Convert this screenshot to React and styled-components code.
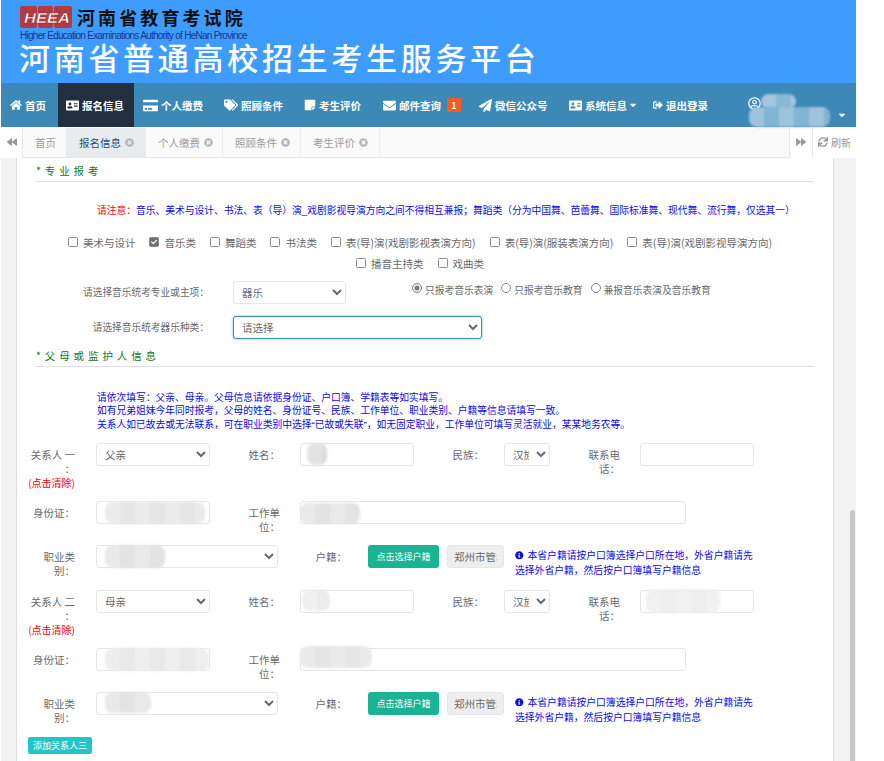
import styled, { createGlobalStyle } from "styled-components";
import {
  FaHome,
  FaAddressCard,
  FaCreditCard,
  FaTags,
  FaStickyNote,
  FaEnvelope,
  FaPaperPlane,
  FaSignOutAlt,
  FaRegUserCircle,
  FaCaretDown,
  FaBackward,
  FaForward,
  FaSync,
  FaTimesCircle,
  FaInfoCircle,
  FaCheck,
} from "react-icons/fa";

const FONT = `"Noto Sans CJK SC", "Liberation Sans", sans-serif`;

const GlobalStyle = createGlobalStyle`
  html, body {
    margin: 0;
    padding: 0;
    height: 761px;
    overflow: hidden;
    background: #fff;
    font-family: ${FONT};
    color: #676a6c;
  }
  * {
    box-sizing: border-box;
  }
`;

const Shell = styled.div`
  display: flex;
  flex-direction: column;
  width: 855px;
  height: 761px;
  margin-left: 1px;
  overflow: hidden;
`;

const Banner = styled.header`
  flex: none;
  height: 83px;
  padding: 5px 0 0 18px;
  background: #3e9cff;
`;

const BrandRow = styled.div`
  display: flex;
  align-items: center;
  height: 25px;
`;

const BrandName = styled.div`
  margin-left: 4px;
  font-size: 18px;
  font-weight: 700;
  line-height: 25px;
  letter-spacing: 3.1px;
  color: #111;
`;

const BrandEnglish = styled.div`
  margin: 0 0 0 1px;
  font-family: "Liberation Sans", sans-serif;
  font-size: 10px;
  line-height: 11px;
  letter-spacing: -0.72px;
  color: #17358a;
  white-space: nowrap;
`;

const PlatformTitle = styled.h1`
  margin: -4px 0 0;
  font-size: 31px;
  font-weight: 500;
  line-height: 40px;
  letter-spacing: 3.7px;
  color: #fff;
  white-space: nowrap;
`;

const Nav = styled.nav`
  flex: none;
  display: flex;
  height: 44px;
  background: #3c89b8;
`;

const NavItem = styled.a`
  display: flex;
  flex: none;
  align-items: center;
  gap: 3px;
  width: ${({ $width }) => $width}px;
  padding-left: ${({ $active }) => ($active ? 8 : 9)}px;
  font-size: 10.5px;
  font-weight: 700;
  color: #fff;
  background: ${({ $active }) => ($active ? "#232f3e" : "transparent")};
  white-space: nowrap;

  svg {
    flex: none;
    font-size: ${({ $icon }) => $icon}px;
  }
`;

const NavCaret = styled(FaCaretDown)`
  margin-left: -2px;

  && {
    font-size: 10px;
  }
`;

const Badge = styled.span`
  display: inline-flex;
  justify-content: center;
  align-items: center;
  width: 14px;
  height: 14px;
  margin-left: 3px;
  border-radius: 1px;
  font-size: 9px;
  background: #fb5a20;
`;

const UserArea = styled.div`
  position: relative;
  display: flex;
  flex: 1;
  padding: 14px 0 0 13px;
  color: #fff;
  font-size: 13px;
`;

const UserCaret = styled(FaCaretDown)`
  position: absolute;
  top: 27px;
  left: 102px;
  font-size: 10px;
`;

const Tabs = styled.div`
  flex: none;
  display: flex;
  height: 30px;
  margin-top: 1px;
  font-size: 10.5px;
`;

const TabArrow = styled.div`
  display: flex;
  flex: none;
  justify-content: center;
  align-items: center;
  width: ${({ $width }) => $width}px;
  padding-bottom: 2px;
  border-left: ${({ $edge }) => ($edge ? "1px solid #e7e7e7" : "none")};
  color: #999;
  font-size: 10px;
  gap: 3px;
  white-space: nowrap;
`;

const TabStrip = styled.div`
  display: flex;
  flex: 1;
  border: solid #e7e7e7;
  border-width: 0 0 1px 1px;
  background: #fafafa;
`;

const Tab = styled.div`
  display: flex;
  flex: none;
  align-items: center;
  gap: 4px;
  width: ${({ $width }) => $width}px;
  padding-left: 12px;
  border-right: 1px solid #ececec;
  color: ${({ $active }) => ($active ? "#1f4a78" : "#9a9a9a")};
  background: ${({ $active }) => ($active ? "#e9ecef" : "transparent")};

  svg {
    font-size: 9px;
    color: #b5b5b5;
  }
`;

const Body = styled.div`
  position: relative;
  display: flex;
  flex: 1;
  min-height: 0;
`;

const Gutter = styled.div`
  flex: none;
  width: ${({ $width }) => $width}px;
  background: #f3f3f3;
  border: solid #dedede;
  border-width: ${({ $side }) => ($side === "left" ? "0 1px 0 0" : "0 0 0 1px")};
`;

const ScrollThumb = styled.div`
  position: absolute;
  top: 352px;
  right: 1px;
  width: 5px;
  height: 260px;
  border-radius: 3px 3px 0 0;
  background: #c8c8c8;
`;

const Content = styled.main`
  flex: none;
  width: 816px;
  overflow: hidden;
  background: #fff;
`;

const SectionHead = styled.div`
  display: flex;
  align-items: flex-end;
  height: ${({ $height }) => $height}px;
  margin: 0 19px;
  padding-bottom: 4px;
  border-bottom: 1px solid #e0e0e0;
  font-size: 10.5px;
  line-height: 13px;
  letter-spacing: 3.9px;
  color: #127a12;
  white-space: nowrap;
`;

const Notice = styled.div`
  padding: ${({ $top }) => $top}px 0 0 80px;
  font-family: "Liberation Sans", ${FONT};
  font-size: 9.75px;
  line-height: 13.5px;
  color: #0a0aee;
  white-space: nowrap;

  b {
    font-weight: 400;
    color: #f00;
  }
`;

const CheckRow = styled.div`
  display: flex;
  justify-content: center;
  align-items: center;
  gap: 14px;
  width: 806px;
  height: 21px;
  margin-top: ${({ $top }) => $top ?? 0}px;
  font-size: 10.5px;
`;

const CheckItem = styled.label`
  display: flex;
  align-items: center;
  gap: 5px;
  white-space: nowrap;
`;

const CheckBox = styled.span`
  display: inline-flex;
  justify-content: center;
  align-items: center;
  width: 10px;
  height: 10px;
  border: 1px solid #8a8a8a;
  border-radius: 1.5px;
  color: #fff;
  font-size: 6px;
  background: ${({ $on }) => ($on ? "#6e6e6e" : "#fff")};
`;

const ChoiceRow = styled.div`
  display: flex;
  align-items: flex-start;
  height: ${({ $height }) => $height}px;
  margin-top: ${({ $top }) => $top ?? 0}px;
  font-size: 9.7px;
`;

const ChoiceLabel = styled.div`
  flex: none;
  width: 192px;
  margin-right: 24px;
  padding-top: 4px;
  line-height: 14px;
  text-align: right;
  white-space: nowrap;
`;

const Field = styled.select`
  flex: none;
  width: ${({ $width }) => $width}px;
  height: 23px;
  padding: 0 4px;
  border: 1px solid ${({ $focus }) => ($focus ? "#3c8dbc" : "#e5e6e7")};
  border-radius: 3px;
  outline: none;
  box-shadow: ${({ $focus }) => ($focus ? "0 0 3px rgba(60, 141, 188, 0.6)" : "none")};
  font-family: ${FONT};
  font-size: 10.5px;
  color: #676a6c;
  background: #fff;
`;

const RadioGroup = styled.div`
  display: flex;
  gap: 8px;
  margin: 2px 0 0 66px;
`;

const RadioItem = styled.label`
  display: flex;
  align-items: center;
  gap: 3px;
  line-height: 14px;
  white-space: nowrap;
  font-size: 9.75px;
`;

const RadioDot = styled.span`
  display: inline-block;
  width: 10px;
  height: 10px;
  margin-top: -3px;
  border: 1px solid #888;
  border-radius: 50%;
  background: ${({ $on }) => ($on ? "#777" : "#fff")};
  box-shadow: inset 0 0 0 1.5px #fff;
`;

const PersonGap = styled.div`
  height: 12px;
`;

const PersonRow = styled.div`
  display: flex;
  align-items: flex-start;
  height: ${({ $height }) => $height}px;
  padding-left: 13px;
  font-size: 10.5px;
`;

const Label = styled.div`
  flex: none;
  width: 45px;
  margin: 0 ${({ $after }) => $after ?? 21}px 0 ${({ $before }) => $before ?? 0}px;
  padding-top: 5px;
  line-height: 14px;
  text-align: right;
`;

const ClearLink = styled.span`
  display: block;
  margin-left: -2px;
  font-size: 10px;
  white-space: nowrap;
  color: #f00;
`;

const Slot = styled.div`
  position: relative;
  flex: none;
  width: ${({ $width }) => $width}px;
  height: 23px;
`;

const TextBox = styled.input`
  display: block;
  width: 100%;
  height: 100%;
  padding: 0 6px;
  border: 1px solid #e5e6e7;
  border-radius: 3px;
  outline: none;
  font-family: ${FONT};
  font-size: 10.5px;
  color: #676a6c;
  background: ${({ disabled }) => (disabled ? "#eeeeee" : "#fff")};
`;

const Smudge = styled.div`
  position: absolute;
  top: ${({ $top }) => $top}px;
  left: ${({ $left }) => $left}px;
  width: ${({ $w }) => $w}px;
  height: ${({ $h }) => $h}px;
  border-radius: 8px;
  background-color: ${({ $color }) => $color ?? "#e6e6e6"};
  background-image: repeating-linear-gradient(90deg, rgba(255, 255, 255, 0.22) 0 15px, transparent 15px 30px);
  filter: blur(1px);
  pointer-events: none;
`;

const PickButton = styled.button`
  flex: none;
  width: 71px;
  height: 23px;
  margin-right: 8px;
  padding: 0;
  border: none;
  border-radius: 3px;
  font-family: ${FONT};
  font-size: 9px;
  color: #fff;
  background: #1ab394;
`;

const Hint = styled.div`
  flex: none;
  margin: 3px 0 0 11px;
  font-size: 9.8px;
  line-height: 14.5px;
  color: #0a0aee;
  white-space: nowrap;

  svg {
    margin-right: 4px;
    font-size: 8.5px;
    vertical-align: -0.5px;
  }
`;

const AddButton = styled.button`
  display: block;
  width: 64px;
  height: 17px;
  margin: 0 0 0 11px;
  padding: 0;
  border: none;
  border-radius: 2px;
  font-family: ${FONT};
  font-size: 9px;
  color: #fff;
  background: #23c6c8;
`;

const NAV_ITEMS = [
  { text: "首页", icon: <FaHome />, width: 57, size: 12 },
  { text: "报名信息", icon: <FaAddressCard />, width: 76, size: 13, active: true },
  { text: "个人缴费", icon: <FaCreditCard />, width: 81, size: 15 },
  { text: "照顾条件", icon: <FaTags />, width: 80, size: 14 },
  { text: "考生评价", icon: <FaStickyNote />, width: 79, size: 12 },
  { text: "邮件查询", icon: <FaEnvelope />, width: 96, size: 13, badge: "1" },
  { text: "微信公众号", icon: <FaPaperPlane />, width: 90, size: 13 },
  { text: "系统信息", icon: <FaAddressCard />, width: 84, size: 13, caret: true },
  { text: "退出登录", icon: <FaSignOutAlt />, width: 91, size: 10 },
];

const TAB_ITEMS = [
  { text: "报名信息", width: 79, active: true },
  { text: "个人缴费", width: 77 },
  { text: "照顾条件", width: 78 },
  { text: "考生评价", width: 79 },
];

const SUBJECTS = ["美术与设计", "音乐类", "舞蹈类", "书法类", "表(导)演(戏剧影视表演方向)", "表(导)演(服装表演方向)", "表(导)演(戏剧影视导演方向)"];

function Logo() {
  return (
    <svg width="54" height="25" viewBox="0 0 54 25">
      <rect x="1" y="1" width="17" height="22" rx="2" fill="#b23a40" />
      <rect x="19" y="1" width="15" height="22" rx="2" fill="#b23a40" />
      <rect x="35" y="1" width="18" height="22" rx="2" fill="#b23a40" />
      <text x="5" y="18" fontFamily="Liberation Sans" fontStyle="italic" fontWeight="700" fontSize="15" fill="#fff" stroke="#7d2428" strokeWidth="0.4" textLength="46" lengthAdjust="spacingAndGlyphs">
        HEEA
      </text>
    </svg>
  );
}

function Person({ order, relation, smudges }) {
  return (
    <>
      <PersonRow $height={58}>
        <Label>
          关系人 {order} ：<ClearLink>(点击清除)</ClearLink>
        </Label>
        <Field $width={114}>
          <option>{relation}</option>
        </Field>
        <Label $before={25} $after={20}>
          姓名：
        </Label>
        <Slot $width={114}>
          <TextBox />
          {smudges.name}
        </Slot>
        <Label $before={25} $after={20}>
          民族：
        </Label>
        <Field $width={46}>
          <option>汉族</option>
        </Field>
        <Label $before={25} $after={20}>
          联系电话：
        </Label>
        <Slot $width={114}>
          <TextBox />
          {smudges.phone}
        </Slot>
      </PersonRow>
      <PersonRow $height={44}>
        <Label>身份证：</Label>
        <Slot $width={114}>
          <TextBox />
          {smudges.id}
        </Slot>
        <Label $before={25} $after={20}>
          工作单位：
        </Label>
        <Slot $width={386}>
          <TextBox />
          {smudges.work}
        </Slot>
      </PersonRow>
      <PersonRow $height={45}>
        <Label>职业类别：</Label>
        <Slot $width={182}>
          <Field $width={182}>
            <option> </option>
          </Field>
          {smudges.job}
        </Slot>
        <Label $before={24} $after={21}>
          户籍：
        </Label>
        <PickButton>点击选择户籍</PickButton>
        <Slot $width={57}>
          <TextBox disabled value="郑州市管城回族区" readOnly />
        </Slot>
        <Hint>
          <FaInfoCircle />
          本省户籍请按户口簿选择户口所在地，外省户籍请先
          <br />
          选择外省户籍，然后按户口簿填写户籍信息
        </Hint>
      </PersonRow>
    </>
  );
}

export default function App() {
  return (
    <Shell>
      <GlobalStyle />
      <Banner>
        <BrandRow>
          <Logo />
          <BrandName>河南省教育考试院</BrandName>
        </BrandRow>
        <BrandEnglish>Higher Education Examinations Authority of HeNan Province</BrandEnglish>
        <PlatformTitle>河南省普通高校招生考生服务平台</PlatformTitle>
      </Banner>

      <Nav>
        {NAV_ITEMS.map((item) => (
          <NavItem key={item.text} $width={item.width} $icon={item.size} $active={item.active}>
            {item.icon}
            {item.text}
            {item.badge && <Badge>{item.badge}</Badge>}
            {item.caret && <NavCaret />}
          </NavItem>
        ))}
        <UserArea>
          <FaRegUserCircle />
          <Smudge $top={11} $left={26} $w={35} $h={15} $color="#88b8d6" />
          <Smudge $top={24} $left={14} $w={81} $h={20} $color="#82b4d3" />
          <UserCaret />
        </UserArea>
      </Nav>

      <Tabs>
        <TabArrow $width={21}>
          <FaBackward />
        </TabArrow>
        <TabStrip>
          <Tab $width={44}>首页</Tab>
          {TAB_ITEMS.map((tab) => (
            <Tab key={tab.text} $width={tab.width} $active={tab.active}>
              {tab.text}
              <FaTimesCircle />
            </Tab>
          ))}
        </TabStrip>
        <TabArrow $width={23} $edge>
          <FaForward />
        </TabArrow>
        <TabArrow $width={44} $edge>
          <FaSync />
          刷新
        </TabArrow>
      </Tabs>

      <Body>
        <Gutter $side="left" $width={16} />
        <Content>
          <SectionHead $height={24}>*专业报考</SectionHead>
          <Notice $top={22}>
            <b>请注意：</b>音乐、美术与设计、书法、表（导）演_戏剧影视导演方向之间不得相互兼报；舞蹈类（分为中国舞、芭蕾舞、国际标准舞、现代舞、流行舞，仅选其一）
          </Notice>
          <CheckRow $top={14}>
            {SUBJECTS.map((name) => (
              <CheckItem key={name}>
                <CheckBox $on={name === "音乐类"}>{name === "音乐类" && <FaCheck />}</CheckBox>
                {name}
              </CheckItem>
            ))}
          </CheckRow>
          <CheckRow>
            <CheckItem>
              <CheckBox />
              播音主持类
            </CheckItem>
            <CheckItem>
              <CheckBox />
              戏曲类
            </CheckItem>
          </CheckRow>
          <ChoiceRow $height={35} $top={7}>
            <ChoiceLabel>请选择音乐统考专业或主项：</ChoiceLabel>
            <Field $width={113}>
              <option>器乐</option>
            </Field>
            <RadioGroup>
              <RadioItem>
                <RadioDot $on />
                只报考音乐表演
              </RadioItem>
              <RadioItem>
                <RadioDot />
                只报考音乐教育
              </RadioItem>
              <RadioItem>
                <RadioDot />
                兼报音乐表演及音乐教育
              </RadioItem>
            </RadioGroup>
          </ChoiceRow>
          <ChoiceRow $height={30}>
            <ChoiceLabel>请选择音乐统考器乐种类：</ChoiceLabel>
            <Field $width={249} $focus>
              <option>请选择</option>
            </Field>
          </ChoiceRow>
          <SectionHead $height={21}>*父母或监护人信息</SectionHead>
          <Notice $top={24}>
            请依次填写：父亲、母亲。父母信息请依据身份证、户口簿、学籍表等如实填写。
            <br />
            如有兄弟姐妹今年同时报考，父母的姓名、身份证号、民族、工作单位、职业类别、户籍等信息请填写一致。
            <br />
            关系人如已故去或无法联系，可在职业类别中选择“已故或失联”，如无固定职业，工作单位可填写灵活就业，某某地务农等。
          </Notice>
          <PersonGap />
          <Person
            order="一"
            relation="父亲"
            smudges={{
              name: <Smudge $top={0} $left={7} $w={20} $h={22} $color="#dcdcdc" />,
              id: <Smudge $top={1} $left={9} $w={100} $h={22} />,
              work: <Smudge $top={2} $left={0} $w={60} $h={21} $color="#e3e3e3" />,
              job: <Smudge $top={0} $left={9} $w={60} $h={23} $color="#e3e3e3" />,
            }}
          />
          <Person
            order="二"
            relation="母亲"
            smudges={{
              name: <Smudge $top={0} $left={2} $w={28} $h={21} $color="#ececec" />,
              phone: <Smudge $top={-1} $left={6} $w={74} $h={24} $color="#eeeeee" />,
              id: <Smudge $top={0} $left={9} $w={104} $h={23} $color="#e9e9e9" />,
              work: <Smudge $top={-2} $left={0} $w={72} $h={22} $color="#e5e5e5" />,
              job: <Smudge $top={0} $left={9} $w={46} $h={21} $color="#e3e3e3" />,
            }}
          />
          <AddButton>添加关系人三</AddButton>
        </Content>
        <Gutter $side="right" $width={23} />
        <ScrollThumb />
      </Body>
    </Shell>
  );
}
